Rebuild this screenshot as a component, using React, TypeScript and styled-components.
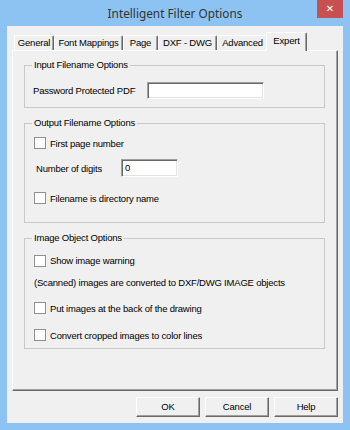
import React from "react";
import styled, { createGlobalStyle } from "styled-components";

const Global = createGlobalStyle`
  html, body { margin: 0; padding: 0; }
  body { width: 350px; height: 430px; overflow: hidden; background: #8cc3f3; }
  * { box-sizing: border-box; }
`;

const Window = styled.div`
  width: 350px;
  height: 430px;
  background: #8cc3f3;
  display: flex;
  flex-direction: column;
  padding: 0 7px 7px 7px;
  font-family: "Liberation Sans", Arial, sans-serif;
  font-size: 9.5px;
  letter-spacing: -0.2px;
  color: #000;
`;

const TitleBar = styled.div`
  height: 26px;
  display: grid;
  grid-template-columns: 1fr auto 1fr;
  align-items: start;
`;

const Title = styled.div`
  grid-column: 2;
  font-family: "Noto Sans", "Open Sans", sans-serif;
  font-size: 11.8px;
  letter-spacing: 0;
  line-height: 26px;
  color: #333;
`;

const CloseButton = styled.div`
  grid-column: 3;
  justify-self: end;
  width: 26px;
  height: 18px;
  background: #c75050;
  color: #fff;
  font-family: "DejaVu Sans", sans-serif;
  font-weight: bold;
  font-size: 10px;
  letter-spacing: 0;
  line-height: 18px;
  text-align: center;
`;

const Client = styled.div`
  flex: 1;
  background: #f0f0f0;
  display: flex;
  flex-direction: column;
  padding: 6px 5px 6px 5px;
`;

const TabStrip = styled.div`
  display: flex;
  align-items: flex-end;
  height: 18px;
  padding-left: 2px;
  position: relative;
  z-index: 1;
`;

const Tab = styled.div<{ $w: number; $active?: boolean }>`
  width: ${(p) => p.$w + (p.$active ? 4 : 0)}px;
  height: ${(p) => (p.$active ? 19 : 15)}px;
  margin: ${(p) => (p.$active ? "0 -2px -1px -2px" : "0")};
  background: #f0f0f0;
  border-top: 1px solid #fff;
  border-left: 1px solid #fff;
  border-right: 1px solid #696969;
  box-shadow: inset -1px 0 0 #a0a0a0;
  border-radius: 2px 2px 0 0;
  text-align: center;
  line-height: ${(p) => (p.$active ? 15 : 14)}px;
  white-space: nowrap;
`;

const Panel = styled.div`
  flex: 1;
  display: flex;
  flex-direction: column;
  border-top: 1px solid #fff;
  border-left: 1px solid #fff;
  border-right: 1px solid #696969;
  border-bottom: 1px solid #696969;
  box-shadow: inset -1px -1px 0 #a0a0a0;
  padding: 8px 12px 0 11px;
`;

const Group = styled.fieldset<{ $pb: number; $mt: number }>`
  margin: ${(p) => p.$mt}px 0 0 0;
  padding: 4px 8px ${(p) => p.$pb}px 8px;
  border: 1px solid #c8c8c8;
  border-radius: 0;
  min-width: 0;
`;

const Legend = styled.legend`
  padding: 0 2px;
  margin-left: -1px;
  line-height: 12px;
`;

const Row = styled.div<{ $h: number; $indent?: number }>`
  height: ${(p) => p.$h}px;
  display: flex;
  align-items: center;
  padding-left: ${(p) => p.$indent ?? 0}px;
  white-space: nowrap;
`;

const Label = styled.span<{ $w?: number }>`
  display: inline-block;
  width: ${(p) => (p.$w ? p.$w + "px" : "auto")};
`;

const Input = styled.div<{ $w: number; $h: number }>`
  width: ${(p) => p.$w}px;
  height: ${(p) => p.$h}px;
  background: #fff;
  border-top: 1px solid #a0a0a0;
  border-left: 1px solid #a0a0a0;
  border-right: 1px solid #fff;
  border-bottom: 1px solid #fff;
  box-shadow: inset 1px 1px 0 #696969, inset -1px -1px 0 #e3e3e3;
  padding: 1px 3px;
  line-height: 13px;
`;

const Box = styled.span`
  width: 12px;
  height: 12px;
  background: #fff;
  border: 1px solid #8e8f8f;
  margin: 0 4px 0 1px;
  flex: none;
`;

const ButtonRow = styled.div`
  display: flex;
  justify-content: flex-end;
  gap: 5px;
  margin-top: 6px;
`;

const Button = styled.div`
  width: 64px;
  height: 20px;
  background: #f0f0f0;
  border-top: 1px solid #fff;
  border-left: 1px solid #fff;
  border-right: 1px solid #696969;
  border-bottom: 1px solid #696969;
  box-shadow: inset -1px -1px 0 #a0a0a0;
  text-align: center;
  line-height: 17px;
`;

const Check = ({ children }: { children: React.ReactNode }) => (
  <>
    <Box />
    <span>{children}</span>
  </>
);

const tabs: [string, number][] = [
  ["General", 40],
  ["Font Mappings", 69],
  ["Page", 35],
  ["DXF - DWG", 59],
  ["Advanced", 51],
  ["Expert", 37],
];

export default function App() {
  return (
    <>
      <Global />
      <Window>
        <TitleBar>
          <Title>Intelligent Filter Options</Title>
          <CloseButton>✕</CloseButton>
        </TitleBar>
        <Client>
          <TabStrip>
            {tabs.map(([t, w]) => (
              <Tab key={t} $w={w} $active={t === "Expert"}>
                {t}
              </Tab>
            ))}
          </TabStrip>
          <Panel>
            <Group $mt={0} $pb={2}>
              <Legend>Input Filename Options</Legend>
              <Row $h={30}>
                <Label $w={114}>Password Protected PDF</Label>
                <Input $w={117} $h={17} />
              </Row>
            </Group>
            <Group $mt={9} $pb={9}>
              <Legend>Output Filename Options</Legend>
              <Row $h={20}>
                <Check>First page number</Check>
              </Row>
              <Row $h={30} $indent={3}>
                <Label $w={85}>Number of digits</Label>
                <Input $w={57} $h={18}>0</Input>
              </Row>
              <Row $h={30}>
                <Check>Filename is directory name</Check>
              </Row>
            </Group>
            <Group $mt={9} $pb={3}>
              <Legend>Image Object Options</Legend>
              <Row $h={25}>
                <Check>Show image warning</Check>
              </Row>
              <Row $h={18} $indent={1}>
                (Scanned) images are converted to DXF/DWG IMAGE objects
              </Row>
              <Row $h={34}>
                <Check>Put images at the back of the drawing</Check>
              </Row>
              <Row $h={20}>
                <Check>Convert cropped images to color lines</Check>
              </Row>
            </Group>
          </Panel>
          <ButtonRow>
            <Button>OK</Button>
            <Button>Cancel</Button>
            <Button>Help</Button>
          </ButtonRow>
        </Client>
      </Window>
    </>
  );
}
